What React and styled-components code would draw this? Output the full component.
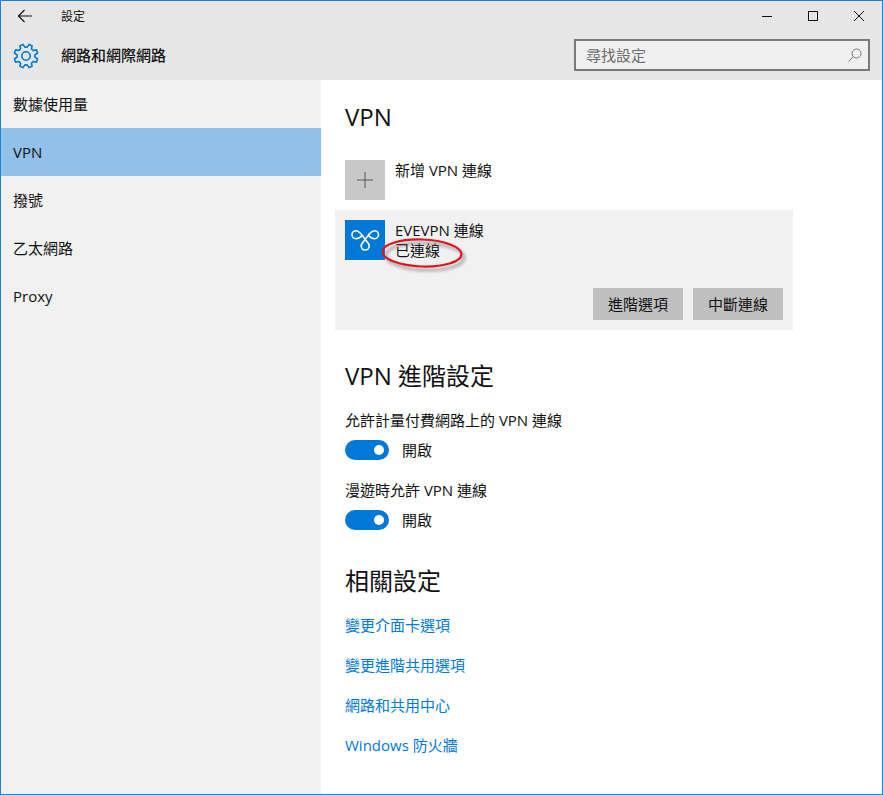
import React from 'react'
import styled, { createGlobalStyle } from 'styled-components'

const GlobalStyle = createGlobalStyle`
    html, body {
        margin: 0;
        padding: 0;
        background: #fff;
    }
    body {
        font-family: "Open Sans", "Noto Sans CJK TC", sans-serif;
        font-size: 15px;
        color: #111;
    }
`

const Window = styled.div`
    box-sizing: border-box;
    width: 883px;
    height: 795px;
    border: 1px solid #1883d7;
    display: flex;
    flex-direction: column;
    background: #fff;
`

const Header = styled.header`
    height: 79px;
    flex: none;
    background: #e6e6e6;
    display: flex;
    flex-direction: column;
`

const TitleBar = styled.div`
    height: 30px;
    display: flex;
    align-items: center;
`

const BackButton = styled.div`
    width: 48px;
    display: flex;
    justify-content: center;
    box-sizing: border-box;
`

const WindowTitle = styled.div`
    margin-left: 12px;
    font-size: 12px;
    flex: 1;
`

const WindowButtons = styled.div`
    display: flex;
`

const WindowButton = styled.div`
    width: 46px;
    height: 30px;
    display: flex;
    align-items: center;
    justify-content: center;
`

const SubBar = styled.div`
    flex: 1;
    display: flex;
    align-items: center;
    padding: 0 12px 0 12px;
`

const PageTitle = styled.div`
    margin-left: 22px;
    padding-bottom: 2px;
    flex: 1;
    font-size: 15px;
    font-weight: 500;
`

const SearchBox = styled.div`
    box-sizing: border-box;
    width: 296px;
    height: 32px;
    border: 2px solid #7a7a7a;
    background: #f0f0f0;
    display: flex;
    align-items: center;
    justify-content: space-between;
    padding: 0 6px 0 10px;
    color: #6d6d6d;
    font-size: 15px;
    margin-top: -1px;
`

const SearchHint = styled.span`
    padding-bottom: 2px;
`

const Body = styled.div`
    flex: 1;
    display: flex;
    min-height: 0;
`

const Sidebar = styled.nav`
    width: 320px;
    flex: none;
    background: #f1f1f1;
`

const NavItem = styled.div`
    box-sizing: border-box;
    height: 48px;
    display: flex;
    align-items: center;
    padding-left: 12px;
    padding-bottom: ${p => (p.$cjk ? '2px' : '0')};
    background: ${p => (p.$active ? '#91c1e8' : 'transparent')};
`

const Content = styled.main`
    flex: 1;
    padding: 18px 0 0 24px;
`

const Heading = styled.h2`
    margin: 0;
    height: 38px;
    line-height: 38px;
    font-size: 24px;
    font-weight: 400;
    color: #111;
`

const AddRow = styled.div`
    display: flex;
    margin-top: 24px;
    height: 40px;
`

const IconTile = styled.div`
    position: relative;
    width: 40px;
    height: 40px;
    flex: none;
    background: ${p => p.$bg};
    display: flex;
    align-items: center;
    justify-content: center;
`

const RowText = styled.div`
    margin-left: 10px;
    line-height: 20px;
`

const Card = styled.section`
    position: relative;
    box-sizing: border-box;
    width: 458px;
    height: 120px;
    margin: 10px 0 0 -10px;
    padding: 10px;
    background: #f1f1f1;
    display: flex;
    flex-direction: column;
    justify-content: space-between;
`

const CardTop = styled.div`
    display: flex;
`

const CardActions = styled.div`
    display: flex;
    justify-content: flex-end;
    gap: 10px;
`

const ActionButton = styled.div`
    box-sizing: border-box;
    width: 90px;
    height: 32px;
    padding-bottom: 2px;
    background: #c0c0c0;
    display: flex;
    align-items: center;
    justify-content: center;
`

const Annotation = styled.svg`
    position: absolute;
    left: 45px;
    top: 25px;
    width: 90px;
    height: 40px;
    overflow: visible;
`

const AnnotationShadow = styled.ellipse`
    fill: none;
    stroke: #666;
    stroke-width: 3;
    opacity: 0.5;
    filter: blur(1.5px);
`

const AnnotationRing = styled.ellipse`
    fill: none;
    stroke: #e0141c;
    stroke-width: 2.2;
`

const SettingsHeading = styled(Heading)`
    margin-top: 28px;
    line-height: 36px;
`

const OptionLabel = styled.div`
    height: 20px;
    line-height: 18px;
    margin-top: ${p => p.$top}px;
`

const ToggleRow = styled.div`
    display: flex;
    align-items: center;
    margin-top: 9px;
    height: 20px;
`

const Toggle = styled.div`
    box-sizing: border-box;
    width: 44px;
    height: 20px;
    border-radius: 10px;
    background: #0078d7;
    display: flex;
    align-items: center;
    justify-content: flex-end;
    padding-right: 5px;
`

const Knob = styled.div`
    width: 10px;
    height: 10px;
    border-radius: 50%;
    background: #fff;
`

const ToggleText = styled.div`
    margin-left: 13px;
    padding-bottom: 2px;
`

const RelatedHeading = styled(Heading)`
    margin-top: 33px;
    line-height: 36px;
`

const LinkList = styled.div`
    display: flex;
    flex-direction: column;
    gap: 20px;
    margin-top: 14px;
`

const TextLink = styled.a`
    color: #0078d7;
    line-height: 20px;
    text-decoration: none;
`

// 8 teeth, each one root-root-tip-tip going round the centre
const gearPath = () => {
    const at = (deg, r) => {
        const a = (deg * Math.PI) / 180
        return `${(13 + r * Math.cos(a)).toFixed(2)} ${(13 + r * Math.sin(a)).toFixed(2)}`
    }
    const pts = []
    for (let i = 0; i < 8; i++) {
        const c = i * 45 + 22.5
        pts.push(at(c - 15, 9), at(c - 8, 12), at(c + 8, 12), at(c + 15, 9))
    }
    return `M${pts.join('L')}Z`
}

const GearIcon = () => (
    <svg width="26" height="26" viewBox="0 0 26 26" fill="none" stroke="#0078d7" strokeWidth="1.6" strokeLinejoin="round">
        <path d={gearPath()} />
        <circle cx="13" cy="13" r="4.2" />
    </svg>
)

const VpnGlyph = () => (
    <svg width="40" height="40" viewBox="0 0 40 40" fill="none" stroke="#fff" strokeWidth="1.6">
        <path d="M20.200 19.500C17.500 15.500 15 10.700 11 10.700a4 4 0 0 0 0 8c2.500 0 4.500-1.200 6.200-3.400" />
        <path d="M20.200 19.500C23 15.500 25.500 10.700 29.500 10.700a4 4 0 0 1 0 8c-2.500 0-4.500-1.200-6.200-3.400" />
        <path d="M20.200 19.500C18.500 22 16.200 23 16.200 26a4 4 0 0 0 8 0C24.200 23 22 22 20.200 19.500z" />
    </svg>
)

function App() {
    return (
        <Window>
            <GlobalStyle />
            <Header>
                <TitleBar>
                    <BackButton>
                        <svg width="16" height="14" viewBox="0 0 16 14" fill="none" stroke="#111" strokeWidth="1.2">
                            <path d="M15 7H1.500M7.500 1 1.500 7l6 6" />
                        </svg>
                    </BackButton>
                    <WindowTitle>設定</WindowTitle>
                    <WindowButtons>
                        <WindowButton>
                            <svg width="10" height="10" viewBox="0 0 10 10" stroke="#111" strokeWidth="1"><path d="M0 5.500h10" /></svg>
                        </WindowButton>
                        <WindowButton>
                            <svg width="10" height="10" viewBox="0 0 10 10" fill="none" stroke="#111" strokeWidth="1"><rect x=".5" y=".5" width="9" height="9" /></svg>
                        </WindowButton>
                        <WindowButton>
                            <svg width="10" height="10" viewBox="0 0 10 10" stroke="#111" strokeWidth="1"><path d="M0 0l10 10M10 0 0 10" /></svg>
                        </WindowButton>
                    </WindowButtons>
                </TitleBar>
                <SubBar>
                    <GearIcon />
                    <PageTitle>網路和網際網路</PageTitle>
                    <SearchBox>
                        <SearchHint>尋找設定</SearchHint>
                        <svg width="14" height="14" viewBox="0 0 14 14" fill="none" stroke="#777" strokeWidth="1">
                            <circle cx="8.500" cy="5.500" r="4.500" />
                            <path d="M5.300 8.700.5 13.500" />
                        </svg>
                    </SearchBox>
                </SubBar>
            </Header>
            <Body>
                <Sidebar>
                    <NavItem $cjk>數據使用量</NavItem>
                    <NavItem $active>VPN</NavItem>
                    <NavItem $cjk>撥號</NavItem>
                    <NavItem $cjk>乙太網路</NavItem>
                    <NavItem>Proxy</NavItem>
                </Sidebar>
                <Content>
                    <Heading>VPN</Heading>
                    <AddRow>
                        <IconTile $bg="#c8c8c8">
                            <svg width="16" height="16" viewBox="0 0 16 16" stroke="#555" strokeWidth="1"><path d="M8 0v16M0 8h16" /></svg>
                        </IconTile>
                        <RowText>新增 VPN 連線</RowText>
                    </AddRow>
                    <Card>
                        <CardTop>
                            <IconTile $bg="#0078d7"><VpnGlyph /></IconTile>
                            <RowText>EVEVPN 連線<br />已連線</RowText>
                        </CardTop>
                        <CardActions>
                            <ActionButton>進階選項</ActionButton>
                            <ActionButton>中斷連線</ActionButton>
                        </CardActions>
                        <Annotation viewBox="0 0 90 40">
                            <AnnotationShadow cx="45" cy="21.500" rx="39" ry="13.500" transform="rotate(2 45 21.500)" />
                            <AnnotationRing cx="42" cy="18" rx="39.500" ry="13.500" transform="rotate(2 42 18)" />
                        </Annotation>
                    </Card>
                    <SettingsHeading>VPN 進階設定</SettingsHeading>
                    <OptionLabel $top={15}>允許計量付費網路上的 VPN 連線</OptionLabel>
                    <ToggleRow>
                        <Toggle><Knob /></Toggle>
                        <ToggleText>開啟</ToggleText>
                    </ToggleRow>
                    <OptionLabel $top={21}>漫遊時允許 VPN 連線</OptionLabel>
                    <ToggleRow>
                        <Toggle><Knob /></Toggle>
                        <ToggleText>開啟</ToggleText>
                    </ToggleRow>
                    <RelatedHeading>相關設定</RelatedHeading>
                    <LinkList>
                        <TextLink>變更介面卡選項</TextLink>
                        <TextLink>變更進階共用選項</TextLink>
                        <TextLink>網路和共用中心</TextLink>
                        <TextLink>Windows 防火牆</TextLink>
                    </LinkList>
                </Content>
            </Body>
        </Window>
    )
}

export default App
